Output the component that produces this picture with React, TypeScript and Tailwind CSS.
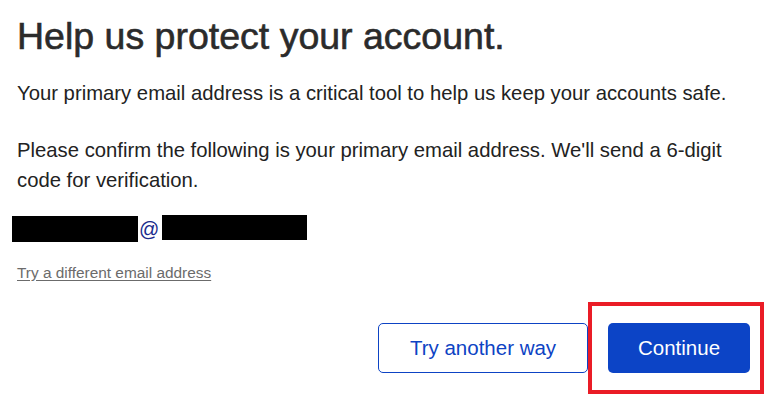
import React from 'react';

const App = () => {
  return (
    <div className="relative w-[782px] h-[401px] bg-white overflow-hidden font-['Liberation_Sans',Arial,sans-serif] text-[#222]">
      <div className="pl-[17px] pr-[20px] pt-[14px]">
        {/* Heading */}
        <h1 className="text-[37.5px] leading-[44px] text-[#2b2b2b] [-webkit-text-stroke:0.6px_#2b2b2b]">
          Help us protect your account.
        </h1>

        <p className="mt-[20px] text-[20.3px] leading-[30px]">
          Your primary email address is a critical tool to help us keep your accounts safe.
        </p>

        <p className="mt-[27px] text-[20.3px] leading-[30px] max-w-[715px]">
          Please confirm the following is your primary email address. We'll send a 6-digit code for verification.
        </p>

        {/* Email (redacted) */}
        <div className="mt-[20px] -ml-[5px] flex items-start h-[28px]">
          <div className="w-[126px] h-[26px] mt-[1px] bg-black" />
          <span className="text-[20px] leading-[28px] text-[#1a2b8c] ml-[1px]">@</span>
          <div className="w-[145px] h-[25px] bg-black ml-[3px]" />
        </div>

        <a
          href="#"
          className="inline-block mt-[21px] text-[15.4px] leading-[18px] text-[#6b6b6b] underline underline-offset-2"
        >
          Try a different email address
        </a>

        {/* Actions */}
        <div className="mt-[38px] pr-[12px] flex justify-end gap-[20px]">
          <button className="w-[210px] h-[50px] rounded-[5px] border border-[#0d43c4] text-[#0d43c4] text-[20.5px] bg-white">
            Try another way
          </button>
          <button className="w-[142px] h-[50px] rounded-[5px] bg-[#0c44c6] text-white text-[20.5px]">
            Continue
          </button>
        </div>
      </div>

      {/* annotation highlight */}
      <div className="absolute left-[588px] top-[302px] w-[176px] h-[92px] border-4 border-[#ea1c26] pointer-events-none" />
    </div>
  );
};

export default App;
